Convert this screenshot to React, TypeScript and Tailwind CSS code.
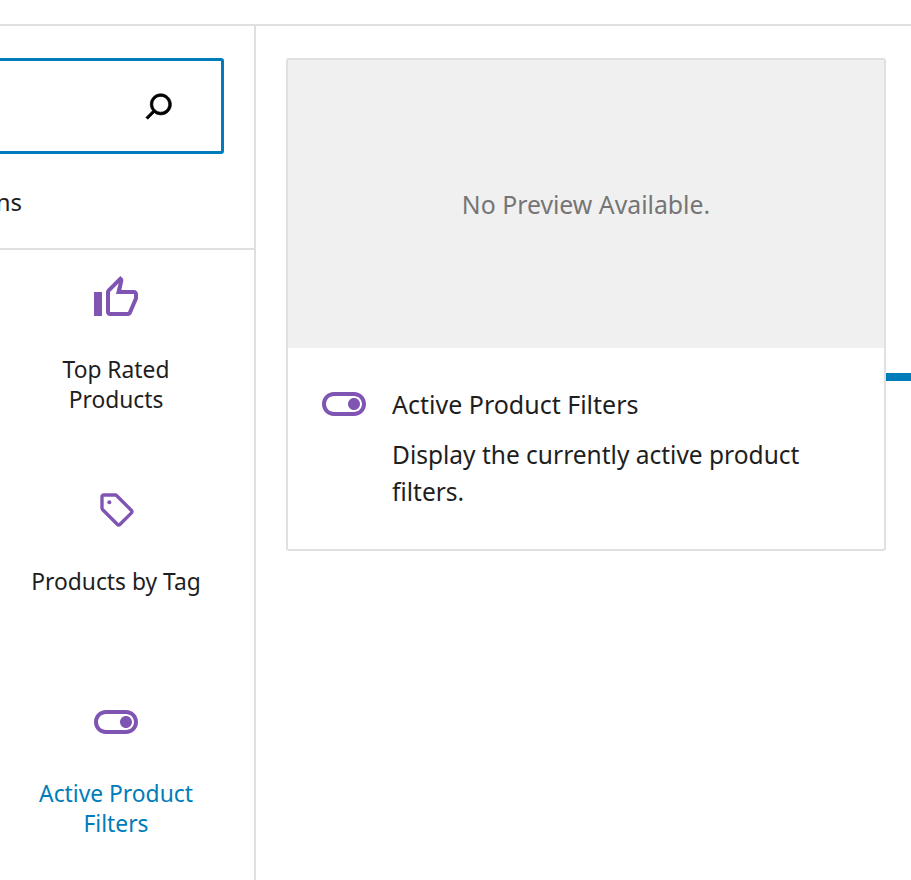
/**
 * Block inserter panel with block preview
 */

function ThumbIcon() {
  return (
    <svg viewBox="0 0 24 24" className="w-12 h-12 fill-[#7f54b3]">
      <path d="M9 21h9c.83 0 1.54-.5 1.84-1.22l3.02-7.05c.09-.23.14-.47.14-.73v-2c0-1.1-.9-2-2-2h-6.31l.95-4.57.03-.32c0-.41-.17-.79-.44-1.06L14.17 1 7.58 7.59C7.22 7.95 7 8.45 7 9v10c0 1.1.9 2 2 2zM9 9l4.34-4.34L12 10h9v2l-3 7H9V9zM1 9h4v12H1z" />
    </svg>
  );
}

function TagIcon() {
  return (
    <svg viewBox="0 0 24 24" className="w-10 h-10 ml-[2px] fill-[#7f54b3]">
      <path d="M21.41 11.58l-9-9C12.05 2.22 11.55 2 11 2H4c-1.1 0-2 .9-2 2v7c0 .55.22 1.05.59 1.42l9 9c.36.36.86.58 1.41.58.55 0 1.05-.22 1.41-.59l7-7c.37-.36.59-.86.59-1.41 0-.55-.23-1.06-.59-1.42zM13 20.01L4 11V4h7v-.01l9 9-7 7.02z" />
      <circle cx="7.4" cy="7.4" r="1.2" />
    </svg>
  );
}

function ToggleIcon() {
  return (
    <svg viewBox="0 0 24 24" className="w-12 h-12 fill-[#7f54b3]">
      <path d="M17 6H7c-3.31 0-6 2.69-6 6s2.69 6 6 6h10c3.31 0 6-2.69 6-6s-2.69-6-6-6zm0 10H7c-2.21 0-4-1.79-4-4s1.79-4 4-4h10c2.21 0 4 1.79 4 4s-1.79 4-4 4zm0-7c-1.66 0-3 1.34-3 3s1.34 3 3 3 3-1.34 3-3-1.34-3-3-3z" />
    </svg>
  );
}

function SearchIcon() {
  return (
    <svg viewBox="0 0 24 24" className="w-[42px] h-[42px] fill-black stroke-black stroke-[0.35]">
      <path d="M13 5c-3.3 0-6 2.7-6 6 0 1.4.5 2.7 1.3 3.7l-3.8 3.8 1.1 1.1 3.8-3.8c1 .8 2.3 1.3 3.7 1.3 3.3 0 6-2.7 6-6S16.3 5 13 5zm0 10.5c-2.5 0-4.5-2-4.5-4.5s2-4.5 4.5-4.5 4.5 2 4.5 4.5-2 4.5-4.5 4.5z" />
    </svg>
  );
}

function BlockItem({ icon, label, active }: { icon: React.ReactNode; label: string; active?: boolean }) {
  return (
    <div className="h-[212px] w-[232px] flex flex-col items-center">
      <div className="h-12 flex items-center justify-center">{icon}</div>
      <div className={`mt-[33px] w-[180px] text-center text-[22.8px] leading-[30px] ${active ? 'text-[#007cba]' : 'text-[#1e1e1e]'}`}>
        {label}
      </div>
    </div>
  );
}

export default function App() {
  return (
    <div className="h-[880px] w-[911px] overflow-hidden bg-white font-['Noto_Sans',sans-serif] flex flex-col">
      <div className="h-[26px] shrink-0 border-b-2 border-[#e0e0e0]" />
      <div className="flex flex-1 min-h-0">
        <div className="w-[256px] shrink-0 border-r-2 border-[#e0e0e0] overflow-hidden">
          <div className="w-[354px] -ml-[100px]">
            <div className="pt-8">
              <div className="h-[96px] w-[324px] border-[3px] border-[#007cba] rounded-[3px] flex items-center justify-end pr-[41px]">
                <SearchIcon />
              </div>
            </div>
            <div className="h-[96px] w-[354px] border-b-2 border-[#e0e0e0] flex items-center justify-end pr-[232px] pt-[2px] text-[24px] text-[#1e1e1e]">
              Patterns
            </div>
            <div className="pl-[100px] pt-6">
              <BlockItem icon={<ThumbIcon />} label="Top Rated Products" />
              <BlockItem icon={<TagIcon />} label="Products by Tag" />
              <BlockItem icon={<ToggleIcon />} label="Active Product Filters" active />
            </div>
          </div>
        </div>
        <div className="flex-1 flex items-start pt-8 pl-[30px]">
          <div className="w-[600px] h-[493px] shrink-0 border-2 border-[#e0e0e0] rounded-[3px] overflow-hidden">
            <div className="h-[288px] pt-[2px] bg-[#f0f0f0] flex items-center justify-center text-[24.8px] text-[#757575]">
              No Preview Available.
            </div>
            <div className="flex gap-6 pl-8 pt-8 pr-8">
              <div className="shrink-0">
                <ToggleIcon />
              </div>
              <div className="text-[#1e1e1e]">
                <div className="text-[25px] leading-[30px] mb-[17px] mt-[9px]">Active Product Filters</div>
                <div className="text-[24.5px] leading-[37px]">Display the currently active product filters.</div>
              </div>
            </div>
          </div>
          <div className="w-[25px] h-2 mt-[315px] shrink-0 bg-[#007cba]" />
        </div>
      </div>
    </div>
  );
}
